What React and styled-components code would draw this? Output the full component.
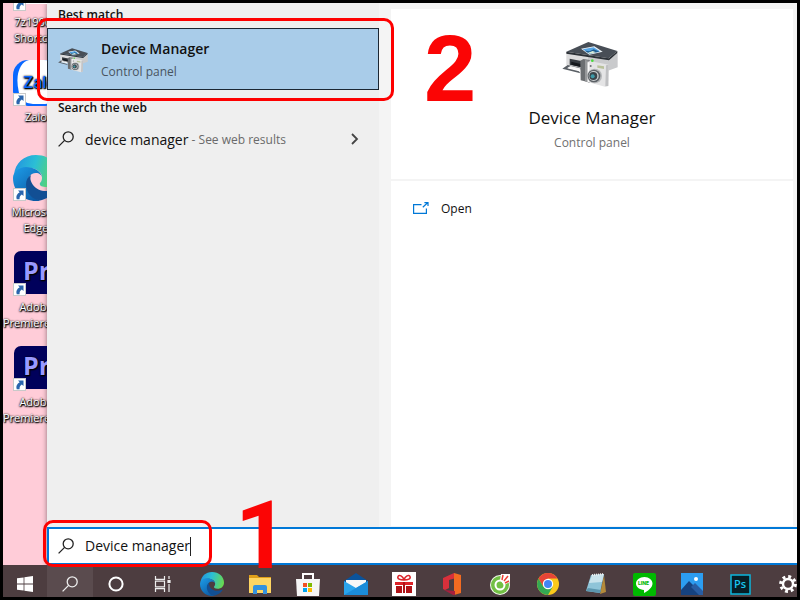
import React, {useState} from 'react';
import styled, {createGlobalStyle} from 'styled-components';

const GlobalStyle = createGlobalStyle`
*, *::before, *::after {
    box-sizing: border-box;
}
body {
    margin: 0;
    font-family: 'Open Sans', 'Noto Sans', sans-serif;
    color: #111;
}
button, input {
    font-family: inherit;
    color: inherit;
}
h2, h3, p, ul {
    margin: 0;
    padding: 0;
}
`;

const Screen = styled.div`
display: flex;
flex-direction: column;
min-height: 100vh;
border: 3px solid #000;
background: #ffccd8;
`;

const Workspace = styled.div`
display: flex;
flex: 1;
`;

const Desktop = styled.ul`
flex: 0 0 44px;
overflow: hidden;
list-style: none;
`;

const Shortcut = styled.li`
width: 66px;
height: 95px;

&:first-child {
    margin-top: -38px;
}
`;

const ShortcutLink = styled.a`
display: block;
color: #fff;
text-decoration: none;
text-align: center;
font-size: 11px;
line-height: 16px;
white-space: nowrap;
text-shadow: 0 0 2px #000, 1px 1px 1px #000, 0 1px 2px #000;
`;

const ShortcutIcon = styled.div`
position: relative;
width: 46px;
height: 46px;
margin: 0 auto 3px;

> svg {
    display: block;
}
`;

const ShortcutArrow = styled.svg`
position: absolute;
left: 0;
bottom: 0;
`;

const SearchPanel = styled.main`
flex: 1;
display: flex;
flex-direction: column;
background: #f4f4f4;
box-shadow: 0 0 5px rgba(0, 0, 0, .45);
`;

const Columns = styled.div`
flex: 1;
display: flex;
padding-right: 4px;
`;

const Results = styled.section`
position: relative;
z-index: 1;
flex: 0 0 332px;
padding-top: 2px;
background: #efefef;
`;

const GroupTitle = styled.h3`
padding-left: 11px;
font-size: 12px;
font-weight: 600;
line-height: 20px;
`;

const BestMatch = styled.div`
position: relative;
margin: 3px 0 8px;
`;

const BestMatchButton = styled.button`
display: flex;
align-items: center;
gap: 12px;
width: 100%;
height: 62px;
padding: 2px 11px 0;
border: 1px solid #1c2733;
background: #a9cce9;
text-align: left;
`;

const AppName = styled.span`
display: block;
font-size: 14px;
font-weight: 600;
line-height: 24px;
`;

const AppKind = styled.span`
display: block;
font-size: 12px;
line-height: 22px;
color: #48545f;
`;

const WebResult = styled.button`
display: flex;
align-items: center;
width: 100%;
height: 42px;
padding: 0 20px 0 11px;
border: 0;
background: none;
font-size: 14px;
white-space: pre;

svg:first-child {
    margin-right: 11px;
}
svg:last-child {
    margin-left: auto;
}
`;

const Hint = styled.span`
font-size: 12px;
color: #6a6a6a;
`;

const Preview = styled.section`
flex: 1;
display: flex;
flex-direction: column;
gap: 2px;
margin: 6px 0 1px 12px;
`;

const PreviewHead = styled.div`
position: relative;
display: flex;
flex-direction: column;
align-items: center;
height: 170px;
padding-top: 32px;
background: #fff;
`;

const PreviewTitle = styled.h2`
margin-top: 17px;
font-size: 17px;
font-weight: 400;
line-height: 28px;
`;

const PreviewKind = styled.p`
font-size: 12px;
line-height: 22px;
color: #707070;
`;

const PreviewActions = styled.div`
flex: 1;
padding: 15px 22px;
background: #fff;
`;

const ActionButton = styled.button`
display: flex;
align-items: center;
gap: 12px;
padding: 0;
border: 0;
background: none;
font-size: 12px;
line-height: 26px;
`;

const SearchBox = styled.label`
position: relative;
display: flex;
align-items: center;
height: 38px;
padding-left: 9px;
border: solid #0078d7;
border-width: 2px 0 2px 2px;
background: #fff;
`;

const SearchInput = styled.input`
field-sizing: content;
margin-left: 11px;
padding: 0;
border: 0;
outline: none;
background: none;
font-size: 14px;
line-height: 24px;
`;

const Caret = styled.span`
width: 1px;
height: 19px;
background: #222;
`;

const Ring = styled.span`
position: absolute;
z-index: 2;
top: ${props => props.$top}px;
left: ${props => props.$left}px;
width: ${props => props.$width}px;
height: ${props => props.$height}px;
border: 3px solid #fe0000;
border-radius: 10px;
pointer-events: none;
`;

const Step = styled.span`
position: absolute;
z-index: 2;
top: ${props => props.$top}px;
left: ${props => props.$left}px;
font-family: ${props => props.$font}, 'Liberation Sans', sans-serif;
font-size: 94px;
font-weight: 700;
line-height: 94px;
color: #fb0505;
pointer-events: none;
`;

const Taskbar = styled.nav`
display: flex;
height: 32px;
overflow: hidden;
background: #4d3d40;
`;

const TaskButton = styled.button`
display: flex;
justify-content: center;
align-items: center;
flex: 0 0 ${props => props.$width || 46}px;
padding: 6px 0 0;
border: 0;
background: ${props => props.$active ? '#5a4b4e' : 'none'};
`;

const Apps = styled.div`
display: flex;
margin-left: 3px;
`;

const Magnifier = ({size, color}) => (
    <svg width={size} height={size} viewBox="0 0 16 16" fill="none" stroke={color} strokeWidth="1.3">
    <circle cx="10.2" cy="5.8" r="5"/>
    <path d="M6.6 9.4L.6 15.4"/>
    </svg>
);

const Arrow = () => (
    <ShortcutArrow width="13" height="13" viewBox="0 0 13 13">
    <rect x=".5" y=".5" width="12" height="12" fill="#fff" stroke="#c9c9c9"/>
    <path d="M5 2.5h5.5V8L8.8 6.4C7 7.6 6.4 9 6.6 11.2H3.7C2.6 8.2 4 5.8 6.7 4.3z" fill="#2a65ad"/>
    </ShortcutArrow>
);

const ArchiveIcon = () => (
    <svg width="46" height="46" viewBox="0 0 46 46">
    <rect x="4" y="2" width="32" height="37" fill="#fff"/>
    <rect x="8" y="10" width="24" height="18" fill="#111"/>
    </svg>
);

const ZaloIcon = () => (
    <svg width="46" height="46" viewBox="0 0 46 46">
    <rect width="46" height="46" rx="15" fill="#0a68ff"/>
    <path d="M16 0h15a15 15 0 0 1 15 15v15a14 14 0 0 1-14 14H20Q9 44 6 33Q2 16 8 6Q11 1 16 0z" fill="#fff"/>
    <text x="10" y="28" fill="#0a68ff" fontFamily="Inter, sans-serif" fontWeight="500" fontSize="16">Zalo</text>
    </svg>
);

const EdgeIcon = ({size, id}) => (
    <svg width={size} height={size} viewBox="0 0 46 46">
    <defs>
    <linearGradient id={id + 'a'} x1="0" x2="1" y1=".3" y2=".5">
    <stop offset="0" stopColor="#2395e0"/>
    <stop offset=".45" stopColor="#2bbfd5"/>
    <stop offset="1" stopColor="#68da50"/>
    </linearGradient>
    <linearGradient id={id + 'b'} x1="0" x2=".7" y1="0" y2="1">
    <stop offset="0" stopColor="#1d9de8"/>
    <stop offset="1" stopColor="#0c59a4"/>
    </linearGradient>
    </defs>
    <path d="M1 20C2 8 11 0 23 0c13 0 23 9 23 20 0 8-6 12-12 12-6 0-8-2-7-4 2-2 2-4 2-6 0-4-4-8-11-9C10 12 4 15 1 20z" fill={'url(#' + id + 'a)'}/>
    <path d="M0 23c0-6 6-11 13-11 9 0 16 5 16 11 0-3-3-5-6-5-6 0-10 6-8 14 1 7 6 12 13 13-2 1-3 1-5 1C10 46 0 36 0 23z" fill={'url(#' + id + 'b)'}/>
    <path d="M18 20c-5 3-6 9-4 15 3 8 10 11 15 10 6-2 11-5 14-10 1-1 0-2-1-1-8 4-18 2-22-4-3-4-3-7-2-10z" fill="#124f94"/>
    </svg>
);

const PremiereIcon = () => (
    <svg width="46" height="46" viewBox="0 0 46 46">
    <rect x="1" y="1" width="44" height="43" rx="7" fill="#00005b"/>
    <text x="10" y="30" fill="#9999ff" fontFamily="Open Sans, sans-serif" fontWeight="700" fontSize="25">Pr</text>
    </svg>
);

const DeviceIcon = ({width, height}) => (
    <svg width={width} height={height} viewBox="132 62 168 138" overflow="visible">
    <path d="M139 96l65 14v44l-24-6-41-14z" fill="#dcdcdd"/>
    <path d="M204 110l64 7 25-19v43l-29 10h-60z" fill="#c9cacc"/>
    <path d="M139 94l66-29 87 27-26 22z" fill="#484e56"/>
    <path d="M139 94l127 20 26-22v6l-25 22-128-20z" fill="#2c3137"/>
    <path d="M183 85l40-7 25 16-40 9z" fill="#eef5fb"/>
    <path d="M188 87l33-6 19 12-31 7z" fill="#57a5e4"/>
    <path d="M194 91l15 2 12-6 18 7-30 6z" fill="#1e5f92"/>
    <path d="M204 97l14-5 10 4-18 4z" fill="#d9eed9"/>
    <path d="M149 115l35 7v19l-35-8z" fill="#353a40"/>
    <path d="M154 124l28 7v9l-28-7z" fill="#14181c"/>
    <path d="M143 134l38 8v5l-28-6-12 3 36 9 4 6-54-14z" fill="#5b6066"/>
    <path d="M152 137l28 7v6l-38-8z" fill="#f6f6f6"/>
    <path d="M181 121l9-5 19 3v68l-9-3-18-4z" fill="#6c6f72"/>
    <path d="M195 119l14 2v66l-14-4z" fill="#97999b"/>
    <path d="M203 126l7-4 56 11-1 64-10 2-52-14z" fill="#e4e4e5"/>
    <path d="M203 126l5 1v58l-5-1z" fill="#fafafa"/>
    <path d="M258 135l8-2-1 64-9 1z" fill="#bfc0c2"/>
    <path d="M232 135l20 3v8l-20-4z" fill="#b9c19b"/>
    <circle cx="212" cy="137" r="3" fill="#6d7072"/>
    <circle cx="224" cy="167" r="22" fill="#b4b6b8"/>
    <circle cx="222" cy="167" r="19" fill="#5b6065"/>
    <circle cx="221" cy="167" r="15" fill="#cdd0d2"/>
    <circle cx="220" cy="167" r="12" fill="#3b454a"/>
    <circle cx="218" cy="168" r="6" fill="#3d9aa8"/>
    <circle cx="217" cy="121" r="4" fill="#4bdb3d"/>
    </svg>
);

const OpenIcon = () => (
    <svg width="16" height="14" viewBox="0 0 16 14" fill="none" stroke="#0078d7" strokeWidth="1.2">
    <path d="M8.5 2.6H.6v8.8h12.8V6.6M9.8 5.2L14.6.8M11.4.7h3.6v3.4"/>
    </svg>
);

const StartIcon = () => (
    <svg width="16" height="16" viewBox="0 0 16 16" fill="#fff">
    <path d="M0 2.3L6.6 1.4v6.2H0zM7.4 1.3L16 0v7.6H7.4zM0 8.4h6.6v6.2L0 13.7zM7.4 8.4H16V16l-8.6-1.3z"/>
    </svg>
);

const CortanaIcon = () => (
    <svg width="16" height="16" viewBox="0 0 16 16">
    <circle cx="8" cy="8" r="6.6" fill="none" stroke="#fff" strokeWidth="2"/>
    </svg>
);

const TaskViewIcon = () => (
    <svg width="17" height="16" viewBox="0 0 17 16" fill="none" stroke="#eee" strokeWidth="1.2">
    <path d="M1.5 0v3.4h9V0M1.5 16v-3.4h9V16M1.5 5.2h9v5.6h-9zM15 0v3M15 8v8"/>
    <path d="M14 4.5h2v2h-2z" fill="#eee"/>
    </svg>
);

const FolderIcon = () => (
    <svg width="22" height="20" viewBox="0 0 22 20">
    <path d="M0 1h8l2 2h12v6H0z" fill="#e09f1a"/>
    <path d="M0 4h22v15H0z" fill="#ffd562"/>
    <path d="M4 20v-7q0-2 2-2h10q2 0 2 2v7h-4v-4H8v4z" fill="#3591dd"/>
    </svg>
);

const StoreIcon = () => (
    <svg width="24" height="24" viewBox="0 0 24 24">
    <path d="M7 8V2h10v6" fill="none" stroke="#fff" strokeWidth="2"/>
    <path d="M0 7h24l-1 17H1z" fill="#f5f5f5"/>
    <path d="M7 11h4v4H7z" fill="#f25022"/>
    <path d="M12 11h4v4h-4z" fill="#7fba00"/>
    <path d="M7 16h4v4H7z" fill="#00a4ef"/>
    <path d="M12 16h4v4h-4z" fill="#ffb900"/>
    </svg>
);

const MailIcon = () => (
    <svg width="24" height="22" viewBox="0 0 24 22">
    <path d="M0 8l12-8 12 8v6H0z" fill="#0a539b"/>
    <path d="M2 7h20v8H2z" fill="#f7f7f7"/>
    <path d="M0 8l12 7 12-7v14H0z" fill="#2aa4ec"/>
    <path d="M0 22l24-14v14z" fill="#1b8cd9"/>
    </svg>
);

const GiftIcon = () => (
    <svg width="24" height="24" viewBox="0 0 24 24">
    <rect width="24" height="24" fill="#fff"/>
    <path d="M12 8C8 8 5 7 6 4.500s5-.5 6 3.500c1-4 5-6 6-3.500s-2 3.500-6 3.500z" fill="none" stroke="#dc2329" strokeWidth="1.500"/>
    <path d="M3 10h8v3H3zM13 10h8v3h-8z" fill="#dc2329"/>
    <path d="M4 14h6v7H4zM14 14h6v7h-6zM11 10h2v11h-2z" fill="#b01318"/>
    </svg>
);

const OfficeIcon = () => (
    <svg width="18" height="22" viewBox="0 0 18 22">
    <path d="M0 5l11-5 2 5-7 2v8l-4 2-2-1z" fill="#d9303b"/>
    <path d="M11 0l7 2v18l-7 2z" fill="#f36b21"/>
    <path d="M1 17l11 1v4H10z" fill="#a81f3d"/>
    </svg>
);

const CocCocIcon = () => (
    <svg width="20" height="22" viewBox="0 0 20 22">
    <circle cx="10" cy="12" r="10" fill="#f3faec"/>
    <circle cx="10" cy="12" r="9" fill="#72bf44"/>
    <circle cx="10" cy="12" r="4.500" fill="none" stroke="#fff" strokeWidth="2"/>
    <path d="M11 1h9v8l-6 3-4-5z" fill="#fff"/>
    <path d="M12 7l1-5M14 8l4-5M15 10l4-2" stroke="#ec4036" strokeWidth="1.5"/>
    </svg>
);

const ChromeIcon = () => (
    <svg width="22" height="22" viewBox="0 0 22 22">
    <circle cx="11" cy="11" r="11" fill="#fbc91b"/>
    <path d="M1.5 5.5A11 11 0 0 1 20.5 5.5H11L6.3 13.7z" fill="#e64537"/>
    <path d="M1.5 5.5A11 11 0 0 0 11 22l4.7-8.3H6.3z" fill="#34a853"/>
    <circle cx="11" cy="11" r="5.2" fill="#fff"/>
    <circle cx="11" cy="11" r="4" fill="#4285f4"/>
    </svg>
);

const NotepadIcon = () => (
    <svg width="22" height="22" viewBox="0 0 22 22">
    <path d="M19 2l2 17-6 2z" fill="#b48a3a"/>
    <path d="M6 2l13-1-4 19-14-2z" fill="#8fc4d8"/>
    <path d="M7 2l12-1-2 8-13 1z" fill="#c9e3ec"/>
    <path d="M1 18l14 2 1-3-13-2z" fill="#5c96ae"/>
    <path d="M7 2l12-1" stroke="#eee" strokeWidth="2" strokeDasharray="1 1"/>
    </svg>
);

const LineIcon = () => (
    <svg width="23" height="23" viewBox="0 0 23 23">
    <rect width="23" height="23" rx="2" fill="#00b900"/>
    <path d="M11.5 4C6.500 4 3 7 3 10.500c0 3.700 3.500 6 8 6.500v3c4-2 8.500-5.500 8.500-9.500 0-3.500-3.500-6.500-8-6.500z" fill="#fff"/>
    <text x="5" y="12" fill="#00b900" fontFamily="Inter, sans-serif" fontWeight="800" fontSize="5">LINE</text>
    </svg>
);

const PhotosIcon = () => (
    <svg width="22" height="22" viewBox="0 0 22 22">
    <rect width="22" height="22" fill="#2c9df0"/>
    <path d="M0 17L8 8l14 14H0z" fill="#16427f"/>
    <path d="M10 14l4-4 8 8v4h-4z" fill="#285da3"/>
    <circle cx="15" cy="6" r="2" fill="#fff"/>
    </svg>
);

const PhotoshopIcon = () => (
    <svg width="21" height="21" viewBox="0 0 21 21">
    <rect x="1" y="1" width="19" height="19" fill="#061e26" stroke="#0bb6dd" strokeWidth="1.5"/>
    <text x="4" y="14" fill="#18c5ef" fontFamily="Open Sans, sans-serif" fontWeight="600" fontSize="11">Ps</text>
    </svg>
);

const GearIcon = () => (
    <svg width="18" height="18" viewBox="0 0 18 18">
    <circle cx="9" cy="9" r="7.400" fill="none" stroke="#fff" strokeWidth="3" strokeDasharray="2.910 2.900"/>
    <circle cx="9" cy="9" r="5" fill="none" stroke="#fff" strokeWidth="2.400"/>
    </svg>
);

const shortcuts = [
    {icon: <ArchiveIcon/>, lines: ['7z1900 -', 'Shortcut']},
    {icon: <ZaloIcon/>, lines: ['Zalo']},
    {icon: <EdgeIcon size={46} id="desk"/>, lines: ['Microsoft', 'Edge']},
    {icon: <PremiereIcon/>, lines: ['Adobe', 'Premiere Pro']},
    {icon: <PremiereIcon/>, lines: ['Adobe', 'Premiere Pro']},
];

const apps = [
    {name: 'Microsoft Edge', icon: <EdgeIcon size={24} id="task"/>},
    {name: 'File Explorer', icon: <FolderIcon/>},
    {name: 'Microsoft Store', icon: <StoreIcon/>},
    {name: 'Mail', icon: <MailIcon/>},
    {name: 'Gifts', icon: <GiftIcon/>},
    {name: 'Office', icon: <OfficeIcon/>},
    {name: 'Coc Coc', icon: <CocCocIcon/>},
    {name: 'Chrome', icon: <ChromeIcon/>},
    {name: 'Notepad', icon: <NotepadIcon/>},
    {name: 'LINE', icon: <LineIcon/>},
    {name: 'Photos', icon: <PhotosIcon/>},
    {name: 'Photoshop', icon: <PhotoshopIcon/>},
    {name: 'Settings', icon: <GearIcon/>},
];

export default function App(){
    const [query, setQuery] = useState('Device manager');

    return(
        <>
        <GlobalStyle/>
        <Screen>
        <Workspace>
        <Desktop>
        {shortcuts.map((item, i) => (
            <Shortcut key={i}>
            <ShortcutLink href="#">
            <ShortcutIcon>{item.icon}<Arrow/></ShortcutIcon>
            {item.lines.map(line => <div key={line}>{line}</div>)}
            </ShortcutLink>
            </Shortcut>
        ))}
        </Desktop>

        <SearchPanel>
        <Columns>
        <Results>
        <GroupTitle>Best match</GroupTitle>
        <BestMatch>
        <BestMatchButton>
        <DeviceIcon width={30} height={26}/>
        <span>
        <AppName>Device Manager</AppName>
        <AppKind>Control panel</AppKind>
        </span>
        </BestMatchButton>
        <Ring $top={-10} $left={-10} $width={357} $height={83}/>
        </BestMatch>
        <GroupTitle>Search the web</GroupTitle>
        <WebResult>
        <Magnifier size={16} color="#222"/>
        <span>device manager</span>
        <Hint> - See web results</Hint>
        <svg width="8" height="12" viewBox="0 0 8 12" fill="none" stroke="#444" strokeWidth="1.800">
        <path d="M1 1l5 5-5 5"/>
        </svg>
        </WebResult>
        </Results>

        <Preview>
        <PreviewHead>
        <DeviceIcon width={56} height={46}/>
        <PreviewTitle>Device Manager</PreviewTitle>
        <PreviewKind>Control panel</PreviewKind>
        <Step $top={13} $left={33} $font="'Liberation Sans'">2</Step>
        </PreviewHead>
        <PreviewActions>
        <ActionButton><OpenIcon/>Open</ActionButton>
        </PreviewActions>
        </Preview>
        </Columns>

        <SearchBox>
        <Magnifier size={16} color="#222"/>
        <SearchInput type="text" aria-label="Search" value={query} onChange={e => setQuery(e.target.value)}/>
        <Caret/>
        <Ring $top={-9} $left={-6} $width={169} $height={47}/>
        <Step $top={-40} $left={186} $font="Roboto">1</Step>
        </SearchBox>
        </SearchPanel>
        </Workspace>

        <Taskbar>
        <TaskButton $width={44} aria-label="Start"><StartIcon/></TaskButton>
        <TaskButton $active aria-label="Search"><Magnifier size={16} color="#eee"/></TaskButton>
        <TaskButton aria-label="Cortana"><CortanaIcon/></TaskButton>
        <TaskButton aria-label="Task View"><TaskViewIcon/></TaskButton>
        <Apps>
        {apps.map(app => (
            <TaskButton key={app.name} $width={48} aria-label={app.name}>{app.icon}</TaskButton>
        ))}
        </Apps>
        </Taskbar>
        </Screen>
        </>
    )
}
